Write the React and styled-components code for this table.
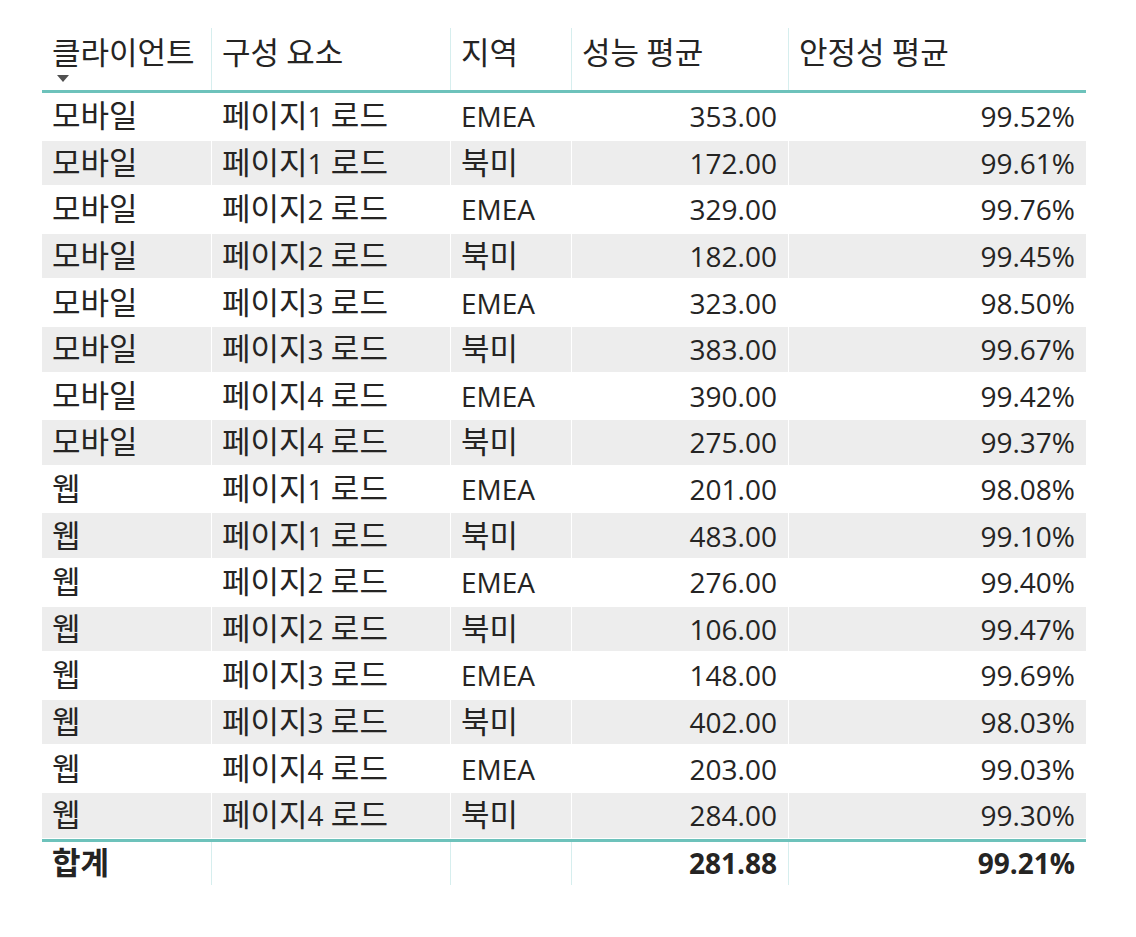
import React from "react";
import styled, { createGlobalStyle } from "styled-components";

const GlobalStyle = createGlobalStyle`
  body {
    margin: 0;
    background: #ffffff;
    font-family: "Open Sans", "Noto Sans CJK KR", sans-serif;
    color: #252423;
  }
`;

const COLS = "169px 239px 121px 217px 298px";
const TEAL = "#6dc2bb";
const LINE = "#d6eeee";

const Page = styled.div`
  padding: 28px 0 0 42px;
`;

const Table = styled.div`
  width: 1044px;
  font-size: 28px;
`;

const Label = styled.span`
  white-space: pre;
`;

// Korean glyphs in the reference are drawn wider than Noto's, so scale them up a bit
const Ko = styled.span`
  font-family: "Noto Sans CJK KR", sans-serif;
  font-size: 31px;
  line-height: 1;
`;

const HeaderRow = styled.div`
  display: grid;
  grid-template-columns: ${COLS};
  height: 62px;
  border-bottom: 3px solid ${TEAL};
`;

const HeaderCell = styled.div`
  position: relative;
  padding: 7px 11px 0 10px;
  line-height: 1.2;
  white-space: nowrap;
  & + & {
    border-left: 1px solid ${LINE};
  }
`;

const SortArrow = styled.span`
  position: absolute;
  left: 15px;
  top: 47px;
  width: 0;
  height: 0;
  border-left: 6px solid transparent;
  border-right: 6px solid transparent;
  border-top: 7px solid #505050;
`;

const Row = styled.div`
  display: grid;
  grid-template-columns: ${COLS};
  height: 46.6px;
  box-sizing: border-box;
  background: ${({ $striped }) => ($striped ? "#ededed" : "#ffffff")};
  border-top: 1px solid #ffffff;
  border-bottom: 1px solid #ffffff;
`;

const Cell = styled.div`
  display: flex;
  align-items: center;
  justify-content: ${({ $right }) => ($right ? "flex-end" : "flex-start")};
  padding: 0 11px 0 10px;
  white-space: nowrap;
  & + & {
    border-left: 1px solid ${({ $striped }) => ($striped ? "#ffffff" : "#f6f6f6")};
  }
`;

const TotalRow = styled.div`
  display: grid;
  grid-template-columns: ${COLS};
  height: 43px;
  border-top: 3px solid ${TEAL};
  font-weight: 700;
`;

const TotalCell = styled.div`
  display: flex;
  align-items: center;
  justify-content: ${({ $right }) => ($right ? "flex-end" : "flex-start")};
  padding: 0 11px 0 10px;
  & + & {
    border-left: 1px solid ${LINE};
  }
`;

const HANGUL = /([\uAC00-\uD7A3]+)/;

const Txt = ({ children }) => (
  <Label>
    {String(children)
      .split(HANGUL)
      .filter(Boolean)
      .map((part, i) => (HANGUL.test(part) ? <Ko key={i}>{part}</Ko> : part))}
  </Label>
);

const rows = [
  ["모바일", "페이지1 로드", "EMEA", "353.00", "99.52%"],
  ["모바일", "페이지1 로드", "북미", "172.00", "99.61%"],
  ["모바일", "페이지2 로드", "EMEA", "329.00", "99.76%"],
  ["모바일", "페이지2 로드", "북미", "182.00", "99.45%"],
  ["모바일", "페이지3 로드", "EMEA", "323.00", "98.50%"],
  ["모바일", "페이지3 로드", "북미", "383.00", "99.67%"],
  ["모바일", "페이지4 로드", "EMEA", "390.00", "99.42%"],
  ["모바일", "페이지4 로드", "북미", "275.00", "99.37%"],
  ["웹", "페이지1 로드", "EMEA", "201.00", "98.08%"],
  ["웹", "페이지1 로드", "북미", "483.00", "99.10%"],
  ["웹", "페이지2 로드", "EMEA", "276.00", "99.40%"],
  ["웹", "페이지2 로드", "북미", "106.00", "99.47%"],
  ["웹", "페이지3 로드", "EMEA", "148.00", "99.69%"],
  ["웹", "페이지3 로드", "북미", "402.00", "98.03%"],
  ["웹", "페이지4 로드", "EMEA", "203.00", "99.03%"],
  ["웹", "페이지4 로드", "북미", "284.00", "99.30%"],
];

const headers = ["클라이언트", "구성 요소", "지역", "성능 평균", "안정성 평균"];

export default function App() {
  return (
    <Page>
      <GlobalStyle />
      <Table>
        <HeaderRow>
          {headers.map((h, i) => (
            <HeaderCell key={h}>
              <Txt>{h}</Txt>
              {i === 0 && <SortArrow />}
            </HeaderCell>
          ))}
        </HeaderRow>

        {rows.map((r, i) => {
          const striped = i % 2 === 1;
          return (
            <Row key={i} $striped={striped}>
              <Cell $striped={striped}><Txt>{r[0]}</Txt></Cell>
              <Cell $striped={striped}><Txt>{r[1]}</Txt></Cell>
              <Cell $striped={striped}><Txt>{r[2]}</Txt></Cell>
              <Cell $striped={striped} $right>{r[3]}</Cell>
              <Cell $striped={striped} $right>{r[4]}</Cell>
            </Row>
          );
        })}

        <TotalRow>
          <TotalCell><Txt>합계</Txt></TotalCell>
          <TotalCell />
          <TotalCell />
          <TotalCell $right>281.88</TotalCell>
          <TotalCell $right>99.21%</TotalCell>
        </TotalRow>
      </Table>
    </Page>
  );
}
